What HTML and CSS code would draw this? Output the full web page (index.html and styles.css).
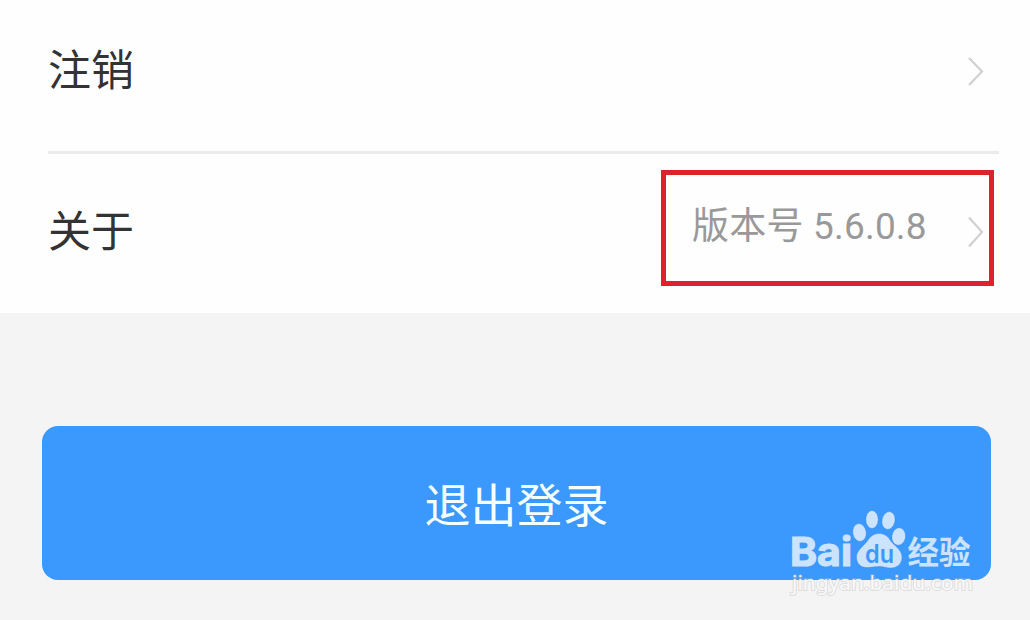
FILE: index.html
```
<!DOCTYPE html>
<html lang="zh-CN">
<head>
    <meta charset="UTF-8">
    <meta name="viewport" content="width=device-width, initial-scale=1.0">
    <title>设置</title>
    <link rel="stylesheet" href="styles.css">
</head>
<body>

<div class="list">
    <div class="row">
        <span class="label">注销</span>
        <svg class="arrow" width="18" height="32" viewBox="0 0 18 32">
            <path d="M1 3 L14 16.500 L1 30"/>
        </svg>
    </div>
    <div class="row about">
        <span class="label">关于</span>
        <div class="version-box">
            <span class="version">版本号 5.6.0.8</span>
            <svg class="arrow" width="18" height="32" viewBox="0 0 18 32">
                <path d="M1 1.500 L14 16 L1 30.500"/>
            </svg>
        </div>
    </div>
</div>

<button class="logout">退出登录</button>

<!-- 水印 -->
<svg class="watermark" width="200" height="100" viewBox="0 0 200 100">
    <g class="logo">
        <text class="bai" x="10" y="66" textLength="62" lengthAdjust="spacingAndGlyphs">Bai</text>
        <ellipse cx="79.500" cy="32.500" rx="6.700" ry="9" transform="rotate(-10 79.500 32.500)"/>
        <ellipse cx="92" cy="19.500" rx="6.200" ry="9"/>
        <ellipse cx="108.500" cy="20.500" rx="6.500" ry="9" transform="rotate(12 108.500 20.500)"/>
        <ellipse cx="118.700" cy="36.500" rx="6.800" ry="8.800" transform="rotate(8 118.700 36.500)"/>
        <path d="M99 33.500 C104 33.500 108 36 110 40 C113 45 122 49 122 57 C122 64 117 68 111 68 C106 68 104 66.500 99 66.500 C94 66.500 92 67.500 87 67.500 C80 67.500 76.500 63 76.500 57 C76.500 50 84 46 88 40 C91 36 94 33.500 99 33.500 Z"/>
        <text class="jingyan" x="127.500" y="63.500" textLength="63" lengthAdjust="spacingAndGlyphs">经验</text>
    </g>
    <text class="du" x="85" y="62.500" textLength="29" lengthAdjust="spacingAndGlyphs">du</text>
    <text class="site" x="12" y="90" textLength="181" lengthAdjust="spacingAndGlyphs">jingyan.baidu.com</text>
</svg>

</body>
</html>
```
FILE: styles.css
```
/* 全局样式 */
body {
    margin: 0;
    height: 620px;
    overflow: hidden;
    position: relative;
    background-color: #f4f4f4;
    font-family: Roboto, "Noto Sans CJK SC", sans-serif;
}

/* 列表 */
.list {
    background-color: #fefefe;
    height: 313px;
}

.row {
    display: flex;
    justify-content: space-between;
    align-items: center;
    box-sizing: border-box;
    height: 154px;
    margin: 0 31px 0 48px;
    padding: 0 13px 10px 0;
    border-bottom: 3px solid #ebebeb;
}

.about {
    height: 159px;
    padding: 0 5px 11px 0;
    border-bottom: none;
}

.label {
    font-size: 43px;
    line-height: 60px;
    color: #333;
}

.about .label {
    padding-top: 7px;
}

.arrow {
    fill: none;
    stroke: #d0d0d0;
    stroke-width: 2.2;
}

/* 版本号 */
.version-box {
    display: flex;
    justify-content: space-between;
    align-items: center;
    box-sizing: border-box;
    width: 333px;
    height: 116px;
    padding: 7px 3px 0 26px;
    border: 5px solid #dc232d;
}

.version {
    font-size: 37px;
    line-height: 50px;
    letter-spacing: 0.2px;
    margin-bottom: 10px;
    color: #999;
}

/* 退出按钮 */
.logout {
    display: block;
    width: 949px;
    height: 154px;
    margin: 113px 0 0 42px;
    padding: 0 0 3px;
    border: none;
    border-radius: 16px;
    background-color: #3b98fc;
    color: #f4ffff;
    font-family: inherit;
    font-size: 46px;
}

/* 水印 */
.watermark {
    position: absolute;
    left: 780px;
    top: 500px;
}

.logo {
    fill: #cbe3fd;
    stroke: #3487e0;
    stroke-width: 0.4;
}

.bai {
    font: bold 40px Inter, sans-serif;
    stroke: #cbe3fd;
    stroke-width: 1.2;
}

.jingyan {
    font: bold 32px "Noto Sans CJK SC", sans-serif;
    stroke: #cbe3fd;
    stroke-width: 0;
}

.du {
    font: 600 25px Inter, sans-serif;
    fill: #3b98fc;
}

.site {
    font: 20px "Noto Sans", sans-serif;
    fill: #fff;
    fill-opacity: 0.85;
    stroke: #bbb;
    stroke-opacity: 0.4;
    stroke-width: 2;
    paint-order: stroke;
}
```
